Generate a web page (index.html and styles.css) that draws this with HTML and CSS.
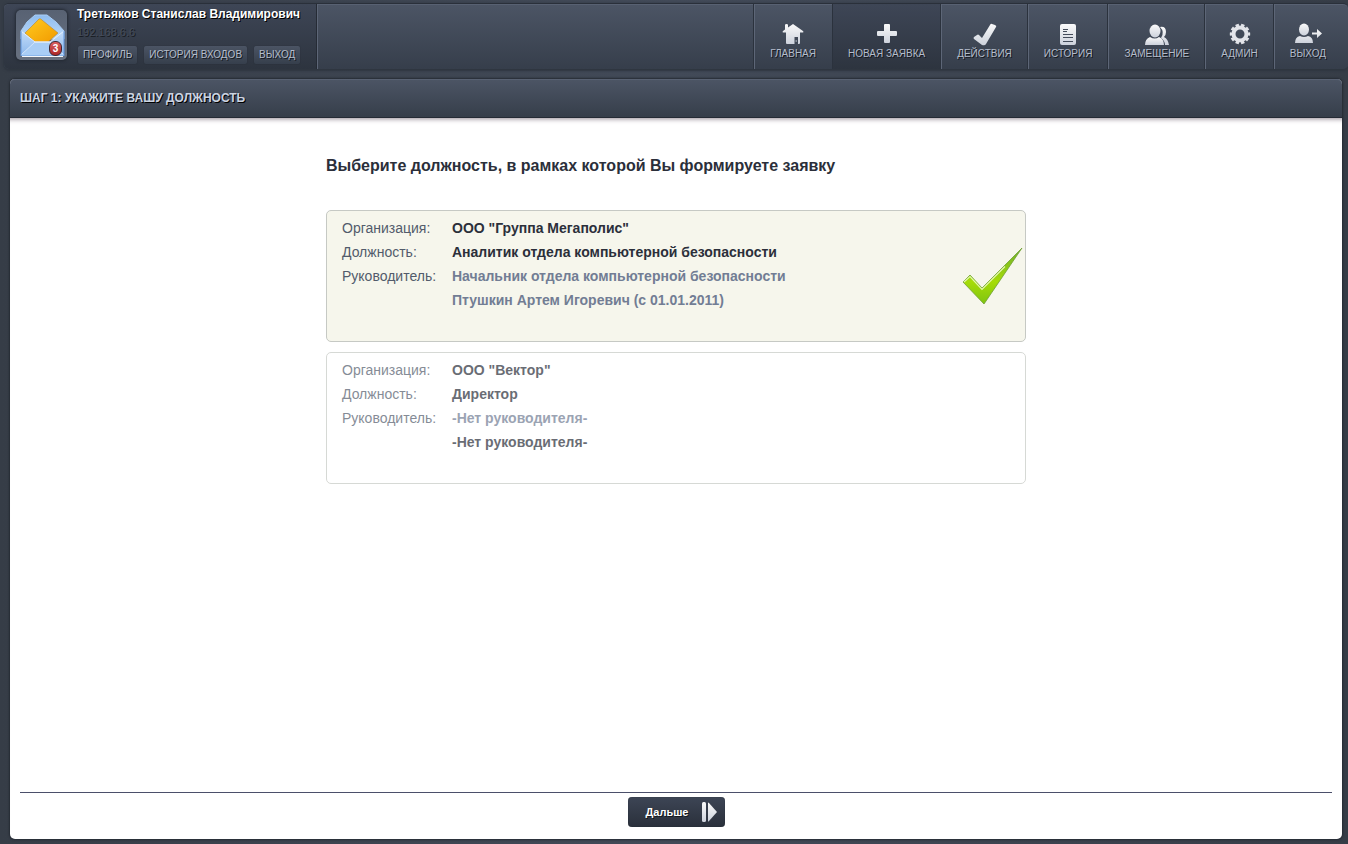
FILE: index.html
```html
<!DOCTYPE html>
<html lang="ru">
<head>
<meta charset="utf-8">
<meta name="viewport" content="width=device-width, initial-scale=1">
<title>Новая заявка</title>
<link rel="stylesheet" href="styles.css">
</head>
<body>
<svg class="defs" aria-hidden="true">
  <defs>
    <linearGradient id="silver" x1="0" y1="0" x2="0" y2="1"><stop offset="0" stop-color="#fafafa"/><stop offset="1" stop-color="#cdd2dc"/></linearGradient>
    <linearGradient id="sky" x1="0" y1="0" x2="0" y2="1"><stop offset="0" stop-color="#c3dcf8"/><stop offset="1" stop-color="#8ab6ec"/></linearGradient>
    <linearGradient id="flap" x1="0" y1="0" x2="0" y2="1"><stop offset="0" stop-color="#8fbdf0"/><stop offset="1" stop-color="#bcd9f8"/></linearGradient>
    <linearGradient id="gold" x1="0" y1="0" x2="1" y2="1"><stop offset="0" stop-color="#ffcb1f"/><stop offset="1" stop-color="#f29a00"/></linearGradient>
    <linearGradient id="lime" x1="0" y1="0" x2="0" y2="1"><stop offset="0" stop-color="#6fae2c"/><stop offset=".6" stop-color="#a6dc08"/><stop offset="1" stop-color="#7fc411"/></linearGradient>
  </defs>
</svg>
<header class="topbar">
  <section class="profile">
    <a class="inbox" href="#" aria-label="Входящие: 3">
      <svg viewBox="0 0 50 50" width="50" height="50" aria-hidden="true">
        <path d="M5 21 11 12 19 5h12l9 7 8 9v8H5z" fill="url(#flap)" stroke="#a9cdf5"/>
        <path d="M9 23 23 9q1-1 3 1l16 13-10 9H19z" fill="url(#gold)" stroke="#b8862c" stroke-width=".6"/>
        <path d="M5 21 19 32h15l14-11v25H5z" fill="url(#sky)"/>
        <path d="M5 45 19 32h15l14 13" fill="#a9cdf5" stroke="#d3e5fb"/>
        <path d="M5 21 19 32h15l14-11" fill="none" stroke="#e6f1fe"/>
        <path d="M5 21v25M48 21v25" stroke="#5f94dc"/>
        <path d="M6 46.500h41" stroke="#f3f6fa"/>
      </svg>
      <span class="badge">3</span>
    </a>
    <div class="who">
      <strong class="name">Третьяков Станислав Владимирович</strong>
      <span class="ip">192.168.6.6</span>
      <div class="links">
        <a class="chip" href="#">ПРОФИЛЬ</a>
        <a class="chip" href="#">ИСТОРИЯ ВХОДОВ</a>
        <a class="chip" href="#">ВЫХОД</a>
      </div>
    </div>
  </section>
  <nav class="menu">
    <a class="item" href="#"><svg viewBox="0 1 28 24" width="28" height="24" aria-hidden="true"><path fill="url(#silver)" d="M6 3q0-1 1.500-1T9 3v2.500L14 2l10 7q1 1 0 1.500h-3V21q0 1-1 1h-1v-7h-3.500v7H8q-1 0-1-1V10.500H4Q3 10 4 9l2-1.500z"/><path fill="#cdd2dc" d="M16.500 18.500h1.500v1h-1.500z"/></svg>ГЛАВНАЯ</a>
    <a class="item current" href="#" aria-current="page"><svg viewBox="0 1 28 24" width="28" height="24" aria-hidden="true"><path fill="url(#silver)" d="M12 2h4q1 0 1 1v6h6q1 0 1 1v3q0 1-1 1h-6v6q0 1-1 1h-4q-1 0-1-1v-6H5q-1 0-1-1v-3q0-1 1-1h6V3q0-1 1-1z"/></svg>НОВАЯ ЗАЯВКА</a>
    <a class="item" href="#"><svg viewBox="0 1 28 24" width="28" height="24" aria-hidden="true"><path fill="url(#silver)" d="m4 15 3-2q1-1 2 0l3 3 8-13q1-2 2-1l3 1q2 1 1 2L16 22q-1 2-4 1l-8-6q-1-1 0-2z"/></svg>ДЕЙСТВИЯ</a>
    <a class="item" href="#"><svg viewBox="0 1 28 24" width="28" height="24" aria-hidden="true"><rect x="6" y="2" width="16" height="21" rx="2" fill="url(#silver)"/><path d="M9 7.500h5M9 9.500h4M9 12.500h10M9 15.500h10M9 19.500h10" stroke="#444c5a"/></svg>ИСТОРИЯ</a>
    <a class="item" href="#"><svg viewBox="0 1 28 24" width="28" height="24" aria-hidden="true"><path fill="url(#silver)" d="M17 5q6-1 6 5 0 3-2 5 4 2 5 8h-4q0-4-4-7 4-6-1-11z"/><ellipse cx="12" cy="9" rx="5.500" ry="6.500" fill="url(#silver)"/><path fill="url(#silver)" d="M2 23q0-6 5-8 5 3 9 0 5 2 5 8z"/></svg>ЗАМЕЩЕНИЕ</a>
    <a class="item" href="#"><svg viewBox="0 1 28 24" width="28" height="24" aria-hidden="true"><g fill="none" stroke="#e2e4e9"><circle cx="14" cy="12" r="6.500" stroke-width="4"/><circle cx="14" cy="12" r="8.800" stroke-width="2.800" pathLength="20" stroke-dasharray="1.200 .8" stroke-dashoffset=".6"/></g></svg>АДМИН</a>
    <a class="item" href="#"><svg viewBox="0 1 28 24" width="28" height="24" aria-hidden="true"><ellipse cx="10" cy="7.500" rx="5" ry="6" fill="url(#silver)"/><path fill="url(#silver)" d="M1 21q0-6 5-7 4 2 8 0 5 1 5 7zM18 10.500h5V7l5 4.500-5 4.500v-3.500h-5z"/></svg>ВЫХОД</a>
  </nav>
</header>
<main class="panel">
  <h1 class="title">ШАГ 1: УКАЖИТЕ ВАШУ ДОЛЖНОСТЬ</h1>
  <form class="step">
    <fieldset class="choices">
      <legend class="question">Выберите должность, в рамках которой Вы формируете заявку</legend>
      <label class="card">
        <input class="pick" type="radio" name="post" checked>
        <span class="facts">
          <span class="key">Организация:</span><span class="value">ООО "Группа Мегаполис"</span>
          <span class="key">Должность:</span><span class="value">Аналитик отдела компьютерной безопасности</span>
          <span class="key">Руководитель:</span><span class="value boss">Начальник отдела компьютерной безопасности</span>
          <span class="value boss second">Птушкин Артем Игоревич (с 01.01.2011)</span>
        </span>
        <svg class="tick" viewBox="0 0 62 60" width="62" height="60" aria-hidden="true"><path d="M2 36 9 29 21 42 61 2 23 58z" fill="url(#lime)" stroke="#6f9f35" stroke-width=".8"/><path d="M3 36 9 30.500 21 43.500 44 20.500" fill="none" stroke="#e4f7b0" stroke-width="1.200"/></svg>
      </label>
      <label class="card">
        <input class="pick" type="radio" name="post">
        <span class="facts">
          <span class="key">Организация:</span><span class="value">ООО "Вектор"</span>
          <span class="key">Должность:</span><span class="value">Директор</span>
          <span class="key">Руководитель:</span><span class="value boss">-Нет руководителя-</span>
          <span class="value second">-Нет руководителя-</span>
        </span>
      </label>
    </fieldset>
    <footer class="actions">
      <button class="next" type="submit">Дальше<svg viewBox="0 0 16 20" width="16" height="20" aria-hidden="true"><rect x="1" width="4" height="20" rx="1.500" fill="url(#silver)"/><path d="M7 1q0-1 1 0l8 9-8 9q-1 1-1 0z" fill="url(#silver)"/></svg></button>
    </footer>
  </form>
</main>
</body>
</html>
```
FILE: styles.css
```css
* { box-sizing: border-box; }

body {
  display: flex;
  flex-direction: column;
  gap: 10px;
  min-height: 100vh;
  margin: 0;
  padding: 3px 0 5px 4px;
  background: linear-gradient(90deg, #363d47, #424a58 50%, #363d47);
  font-family: "Liberation Sans", Arial, sans-serif;
}

a { color: inherit; text-decoration: none; }
svg { display: block; flex: none; }
.defs { position: absolute; width: 0; height: 0; }

.topbar {
  display: flex;
  justify-content: space-between;
  height: 66px;
  border-top: 1px solid #2a303a;
  border-radius: 5px;
  background: linear-gradient(#4c5565, #363e4b);
  box-shadow: inset 0 1px #586172, 0 1px 2px 1px #2f3640;
}

.profile {
  display: flex;
  gap: 10px;
  width: 313px;
  padding: 2px 0 0 12px;
  border-right: 1px solid #252b35;
  border-radius: 5px 0 0 5px;
  background: linear-gradient(#3e4656, #2d343f);
  box-shadow: 1px 0 #5d6677;
}

.inbox {
  position: relative;
  width: 51px;
  height: 50px;
  margin-top: 4px;
  border-radius: 5px;
  background: linear-gradient(#586273, #687180);
  box-shadow: 0 0 3px 1px #232933;
}

.badge {
  position: absolute;
  right: 5px;
  bottom: 4px;
  width: 13px;
  height: 15px;
  border: 1px solid #402832;
  border-radius: 6px;
  background: linear-gradient(#dc6060, #ad2727);
  color: #fff;
  font-size: 10px;
  font-weight: bold;
  line-height: 14px;
  text-align: center;
}

.who { display: flex; flex-direction: column; white-space: nowrap; }
.name { color: #fff; font-size: 12px; line-height: 16px; text-shadow: 1px 1px #000; }
.ip { margin-top: 2px; color: #454d5b; font-size: 11px; line-height: 16px; text-shadow: 1px 1px #161a20; }
.links { display: flex; gap: 7px; margin: 6px 0 0 1px; }

.chip {
  padding: 0 5px;
  border-radius: 2px;
  background: linear-gradient(#4b5464, #363f4c);
  box-shadow: 0 0 1px #1f252e;
  color: #b4bccb;
  font-size: 10px;
  line-height: 18px;
  text-shadow: 1px 1px #14181e;
}

.menu { display: flex; padding-right: 6px; }

.item {
  display: flex;
  flex-direction: column;
  align-items: center;
  padding: 19px 16px 0;
  box-shadow: inset 1px 0 #5d6677, -1px 0 #2b323d;
  color: #b4bccb;
  font-size: 10px;
  line-height: 14px;
  text-shadow: 1px 1px #14181e;
}

.current {
  background: linear-gradient(#3e4656, #2d343f);
  box-shadow: inset 1px 0 #2b323d;
}

.panel {
  display: flex;
  flex: 1;
  flex-direction: column;
  margin: 0 6px;
  border-radius: 5px;
  background: #fff;
  box-shadow: 0 0 2px 1px #252a33;
}

.title {
  margin: 0;
  padding: 0 10px;
  border-bottom: 1px solid #252b35;
  border-radius: 5px 5px 0 0;
  background: linear-gradient(#4c5565, #363e4a);
  box-shadow: inset 0 1px #586172;
  color: #ccd4e2;
  font-size: 12px;
  line-height: 38px;
  text-shadow: 1px 1px #000;
}

.step {
  display: flex;
  flex: 1;
  flex-direction: column;
  padding: 38px 10px 12px;
  border-radius: 0 0 5px 5px;
  box-shadow: inset 0 6px 5px -5px #968c96;
}

.choices {
  display: flex;
  flex-direction: column;
  gap: 10px;
  width: 100%;
  max-width: 700px;
  margin: 0 auto auto;
  padding: 0;
  border: 0;
}

.question {
  margin-bottom: 34px;
  padding: 0;
  color: #2b2f3a;
  font-size: 16px;
  font-weight: bold;
  line-height: 20px;
}

.card {
  display: flex;
  align-items: center;
  justify-content: space-between;
  min-height: 132px;
  padding: 0 2px 0 15px;
  border: 1px solid #c6c9c4;
  border-radius: 5px;
  font-size: 14px;
  line-height: 24px;
  opacity: .7;
}

.card:has(.pick:checked) { background: #f6f6ec; opacity: 1; }
.pick { position: absolute; opacity: 0; }

.facts {
  display: grid;
  grid-template-columns: 110px auto;
  align-self: flex-start;
  padding: 5px 0 29px;
}

.key { color: #525b6b; }
.value { color: #2b2f3a; font-weight: bold; }
.boss { color: #727d94; }
.second { grid-column: 2; }

.actions {
  display: flex;
  justify-content: center;
  padding-top: 4px;
  border-top: 1px solid #4b4f6a;
}

.next {
  display: flex;
  align-items: center;
  gap: 12px;
  height: 30px;
  padding: 0 8px 0 18px;
  border: 0;
  border-radius: 4px;
  background: linear-gradient(#3d4555, #2a303b);
  box-shadow: inset 0 0 1px #1c2129;
  color: #fff;
  font: bold 11px "Liberation Sans", Arial, sans-serif;
  text-shadow: 1px 1px #14181e;
}
```
